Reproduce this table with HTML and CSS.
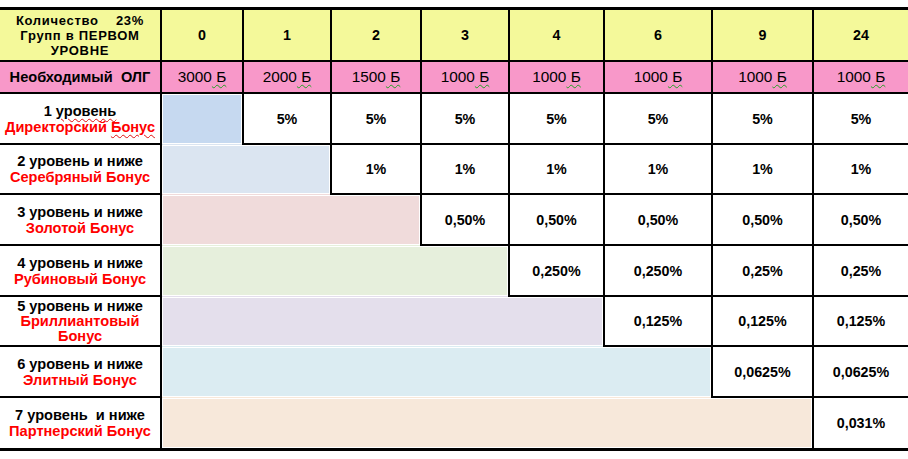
FILE: index.html
```html
<!DOCTYPE html>
<html lang="ru">
<head>
<meta charset="utf-8">
<link rel="stylesheet" href="styles.css">
</head>
<body>
<div class="sheet">
<table class="bonus">
  <colgroup>
    <col class="c-label"><col class="c0"><col class="c1"><col class="c2"><col class="c3"><col class="c4"><col class="c5"><col class="c6"><col class="c7">
  </colgroup>
  <tr class="r-head">
    <td class="head-label"><span class="pre">Количество    23%</span><br>Групп в ПЕРВОМ<br>УРОВНЕ</td>
    <td>0</td><td>1</td><td>2</td><td>3</td><td>4</td><td>6</td><td>9</td><td>24</td>
  </tr>
  <tr class="r-olg">
    <td class="olg-label">Необходимый&nbsp; ОЛГ</td>
    <td>3000<span class="sq-g"> Б</span></td>
    <td>2000<span class="sq-g"> Б</span></td>
    <td>1500<span class="sq-g"> Б</span></td>
    <td>1000<span class="sq-g"> Б</span></td>
    <td>1000<span class="sq-g"> Б</span></td>
    <td>1000<span class="sq-g"> Б</span></td>
    <td>1000<span class="sq-g"> Б</span></td>
    <td>1000<span class="sq-g"> Б</span></td>
  </tr>
  <tr class="r-lvl">
    <td class="lbl">1 <span class="sq-r">уровень</span><br><span class="red">Директорский <span class="sq-r">Бонус</span></span></td>
    <td class="fill f1"></td>
    <td>5%</td><td>5%</td><td>5%</td><td>5%</td><td>5%</td><td>5%</td><td>5%</td>
  </tr>
  <tr class="r-lvl r-short">
    <td class="lbl">2 уровень и ниже<br><span class="red">Серебряный Бонус</span></td>
    <td class="fill f2" colspan="2"></td>
    <td>1%</td><td>1%</td><td>1%</td><td>1%</td><td>1%</td><td>1%</td>
  </tr>
  <tr class="r-lvl">
    <td class="lbl">3 уровень и ниже<br><span class="red">Золотой Бонус</span></td>
    <td class="fill f3" colspan="3"></td>
    <td>0,50%</td><td>0,50%</td><td>0,50%</td><td>0,50%</td><td>0,50%</td>
  </tr>
  <tr class="r-lvl">
    <td class="lbl">4 уровень и ниже<br><span class="red">Рубиновый Бонус</span></td>
    <td class="fill f4" colspan="4"></td>
    <td>0,250%</td><td>0,250%</td><td>0,25%</td><td>0,25%</td>
  </tr>
  <tr class="r-lvl r-short">
    <td class="lbl tight">5 уровень и ниже<br><span class="red">Бриллиантовый<br>Бонус</span></td>
    <td class="fill f5" colspan="5"></td>
    <td>0,125%</td><td>0,125%</td><td>0,125%</td>
  </tr>
  <tr class="r-lvl">
    <td class="lbl">6 уровень и ниже<br><span class="red">Элитный Бонус</span></td>
    <td class="fill f6" colspan="6"></td>
    <td>0,0625%</td><td>0,0625%</td>
  </tr>
  <tr class="r-lvl r-last">
    <td class="lbl"><span class="pre">7 уровень  и ниже</span><br><span class="red">Партнерский Бонус</span></td>
    <td class="fill f7" colspan="7"></td>
    <td>0,031%</td>
  </tr>
</table>
</div>
</body>
</html>
```

FILE: styles.css
```css
html, body {
  margin: 0;
  padding: 0;
  background: #ffffff;
}

body {
  padding-top: 7px;
  font-family: "Liberation Sans", Arial, sans-serif;
  color: #000;
}

.sheet {
  width: 908px;
  border-top: 3px solid #000;
  border-bottom: 3px solid #000;
}

.bonus {
  width: 908px;
  table-layout: fixed;
  border-collapse: collapse;
  border: none;
}

.c-label { width: 161px; }
.c0 { width: 82px; }
.c1 { width: 88px; }
.c2 { width: 90px; }
.c3 { width: 88px; }
.c4 { width: 95px; }
.c5 { width: 108px; }
.c6 { width: 101px; }
.c7 { width: 95px; }

.bonus td {
  border: 2px solid #000;
  padding: 0 1px;
  text-align: center;
  vertical-align: middle;
  font-size: 14.3px;
  font-weight: bold;
  line-height: 16px;
  background: #fff;
  overflow: visible;
}

.bonus td.lbl,
.bonus td.olg-label {
  font-size: 14.6px;
  white-space: nowrap;
}

.bonus td.head-label {
  font-size: 13px;
  line-height: 15px;
  letter-spacing: 0.7px;
  white-space: nowrap;
}

.bonus tr > td:first-child { border-left: none; }
.bonus tr > td:last-child { border-right: none; }
.r-head > td { border-top: none; }
.r-last > td { border-bottom: none; }

.r-head { height: 51px; }
.r-head td { background: #f4f99a; }

.r-olg { height: 32px; }
.r-olg td {
  background: #f898c9;
  font-weight: normal;
  font-size: 15.4px;
}
.r-olg td.olg-label { font-weight: bold; }

.r-lvl { height: 51px; }
.r-lvl.r-short { height: 50px; }

.bonus td.lbl.tight { line-height: 15px; }

.pre { white-space: pre; }

.red { color: #ff0000; }

.sq-r {
  text-decoration: underline wavy #e01010;
  text-decoration-thickness: 1px;
  text-underline-offset: 2px;
}

.sq-g {
  text-decoration: underline wavy #22a022;
  text-decoration-thickness: 1px;
  text-underline-offset: 2px;
}

.bonus td.fill {
  border: none;
  box-shadow: inset 0 0 0 1px #fff;
}
.f1 { background: #c6d9f0 !important; }
.f2 { background: #dbe5f1 !important; }
.f3 { background: #f0dbdb !important; }
.f4 { background: #e6efdc !important; }
.f5 { background: #e4dfec !important; }
.f6 { background: #dbecf2 !important; }
.f7 { background: #f7e8da !important; }
```
